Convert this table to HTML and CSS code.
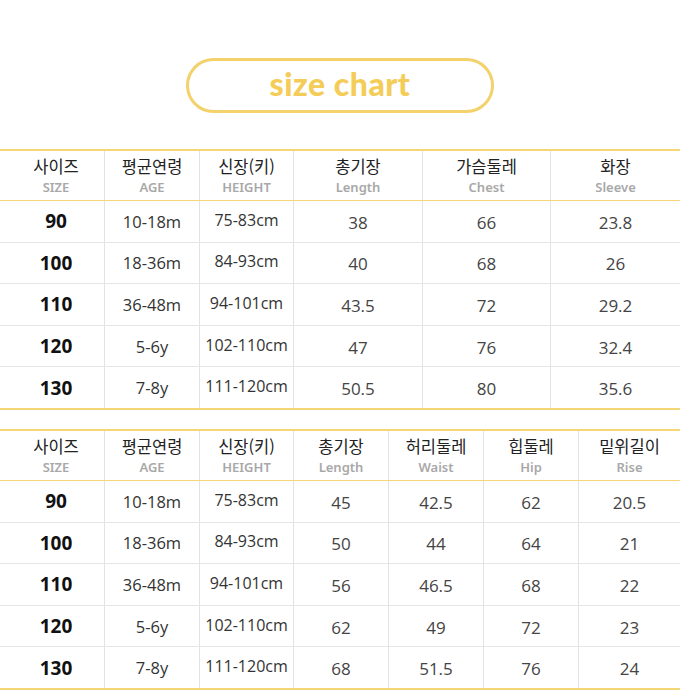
FILE: index.html
```html
<!DOCTYPE html>
<html lang="ko">
<head>
<meta charset="utf-8">
<link rel="stylesheet" href="styles.css">
</head>
<body>
<div class="title-wrap"><div class="pill">size chart</div></div>

<div class="chart top">
  <div class="row head">
    <div class="cell"><span class="ko">사이즈</span><span class="en">SIZE</span></div>
    <div class="cell"><span class="ko">평균연령</span><span class="en">AGE</span></div>
    <div class="cell"><span class="ko">신장(키)</span><span class="en">HEIGHT</span></div>
    <div class="cell"><span class="ko">총기장</span><span class="en">Length</span></div>
    <div class="cell"><span class="ko">가슴둘레</span><span class="en">Chest</span></div>
    <div class="cell"><span class="ko">화장</span><span class="en">Sleeve</span></div>
  </div>
  <div class="row"><div class="cell size">90</div><div class="cell">10-18m</div><div class="cell h">75-83cm</div><div class="cell n">38</div><div class="cell n">66</div><div class="cell n">23.8</div></div>
  <div class="row"><div class="cell size">100</div><div class="cell">18-36m</div><div class="cell h">84-93cm</div><div class="cell n">40</div><div class="cell n">68</div><div class="cell n">26</div></div>
  <div class="row"><div class="cell size">110</div><div class="cell">36-48m</div><div class="cell h">94-101cm</div><div class="cell n">43.5</div><div class="cell n">72</div><div class="cell n">29.2</div></div>
  <div class="row"><div class="cell size">120</div><div class="cell">5-6y</div><div class="cell h">102-110cm</div><div class="cell n">47</div><div class="cell n">76</div><div class="cell n">32.4</div></div>
  <div class="row"><div class="cell size">130</div><div class="cell">7-8y</div><div class="cell h">111-120cm</div><div class="cell n">50.5</div><div class="cell n">80</div><div class="cell n">35.6</div></div>
</div>

<div class="chart bottom">
  <div class="row head">
    <div class="cell"><span class="ko">사이즈</span><span class="en">SIZE</span></div>
    <div class="cell"><span class="ko">평균연령</span><span class="en">AGE</span></div>
    <div class="cell"><span class="ko">신장(키)</span><span class="en">HEIGHT</span></div>
    <div class="cell"><span class="ko">총기장</span><span class="en">Length</span></div>
    <div class="cell"><span class="ko">허리둘레</span><span class="en">Waist</span></div>
    <div class="cell"><span class="ko">힙둘레</span><span class="en">Hip</span></div>
    <div class="cell"><span class="ko">밑위길이</span><span class="en">Rise</span></div>
  </div>
  <div class="row"><div class="cell size">90</div><div class="cell">10-18m</div><div class="cell h">75-83cm</div><div class="cell n">45</div><div class="cell n">42.5</div><div class="cell n">62</div><div class="cell n">20.5</div></div>
  <div class="row"><div class="cell size">100</div><div class="cell">18-36m</div><div class="cell h">84-93cm</div><div class="cell n">50</div><div class="cell n">44</div><div class="cell n">64</div><div class="cell n">21</div></div>
  <div class="row"><div class="cell size">110</div><div class="cell">36-48m</div><div class="cell h">94-101cm</div><div class="cell n">56</div><div class="cell n">46.5</div><div class="cell n">68</div><div class="cell n">22</div></div>
  <div class="row"><div class="cell size">120</div><div class="cell">5-6y</div><div class="cell h">102-110cm</div><div class="cell n">62</div><div class="cell n">49</div><div class="cell n">72</div><div class="cell n">23</div></div>
  <div class="row"><div class="cell size">130</div><div class="cell">7-8y</div><div class="cell h">111-120cm</div><div class="cell n">68</div><div class="cell n">51.5</div><div class="cell n">76</div><div class="cell n">24</div></div>
</div>
</body>
</html>
```

FILE: styles.css
```css
html, body {
  margin: 0;
  padding: 0;
  background: #ffffff;
}
body {
  width: 680px;
  font-family: "Open Sans", "Noto Sans CJK KR", sans-serif;
  color: #333;
}
.title-wrap {
  padding-top: 58px;
  height: 149px;
  box-sizing: border-box;
  display: flex;
  justify-content: center;
  align-items: flex-start;
}
.pill {
  box-sizing: border-box;
  width: 308px;
  height: 55px;
  border: 3px solid #f3d16b;
  border-radius: 28px;
  display: flex;
  align-items: center;
  justify-content: center;
  font-family: "Lato", sans-serif;
  font-weight: 900;
  font-size: 32px;
  color: #f4cd58;
  letter-spacing: 0.5px;
  padding-bottom: 5px;
}
.chart {
  border-top: 2px solid #f5d676;
  border-bottom: 2px solid #f5d676;
}
.chart.bottom {
  margin-top: 19px;
}
.row {
  display: grid;
  height: 40.6px;
  border-top: 1px solid #e6e6e6;
}
.top .row {
  grid-template-columns: 104px 95px 94px 129px 128px 130px;
}
.bottom .row {
  grid-template-columns: 104px 95px 94px 95px 95px 95px 102px;
}
.row.head {
  height: 49px;
  border-top: none;
  border-bottom: 1px solid #f5d676;
}
.row.head + .row {
  border-top: none;
}
.cell {
  display: flex;
  align-items: center;
  justify-content: center;
  border-left: 1px solid #e3e3e3;
  font-size: 16.5px;
  color: #333;
}
.cell:first-child {
  border-left: none;
  padding-left: 8px;
}
.head .cell {
  flex-direction: column;
  justify-content: center;
  padding-top: 1px;
}
.ko {
  font-family: "Noto Sans CJK KR", sans-serif;
  font-weight: 400;
  font-size: 16.5px;
  line-height: 20px;
  color: #222;
}
.en {
  font-family: "Noto Sans", sans-serif;
  font-weight: 600;
  font-size: 13px;
  line-height: 17px;
  color: #a8a8a8;
  margin-top: 3px;
}
.cell.size {
  font-weight: 700;
  font-size: 19px;
  color: #111;
}
.cell.h {
  font-size: 16px;
  padding-bottom: 3px;
}
.cell.n {
  color: #444;
  font-size: 17px;
  padding-top: 2px;
}
```
